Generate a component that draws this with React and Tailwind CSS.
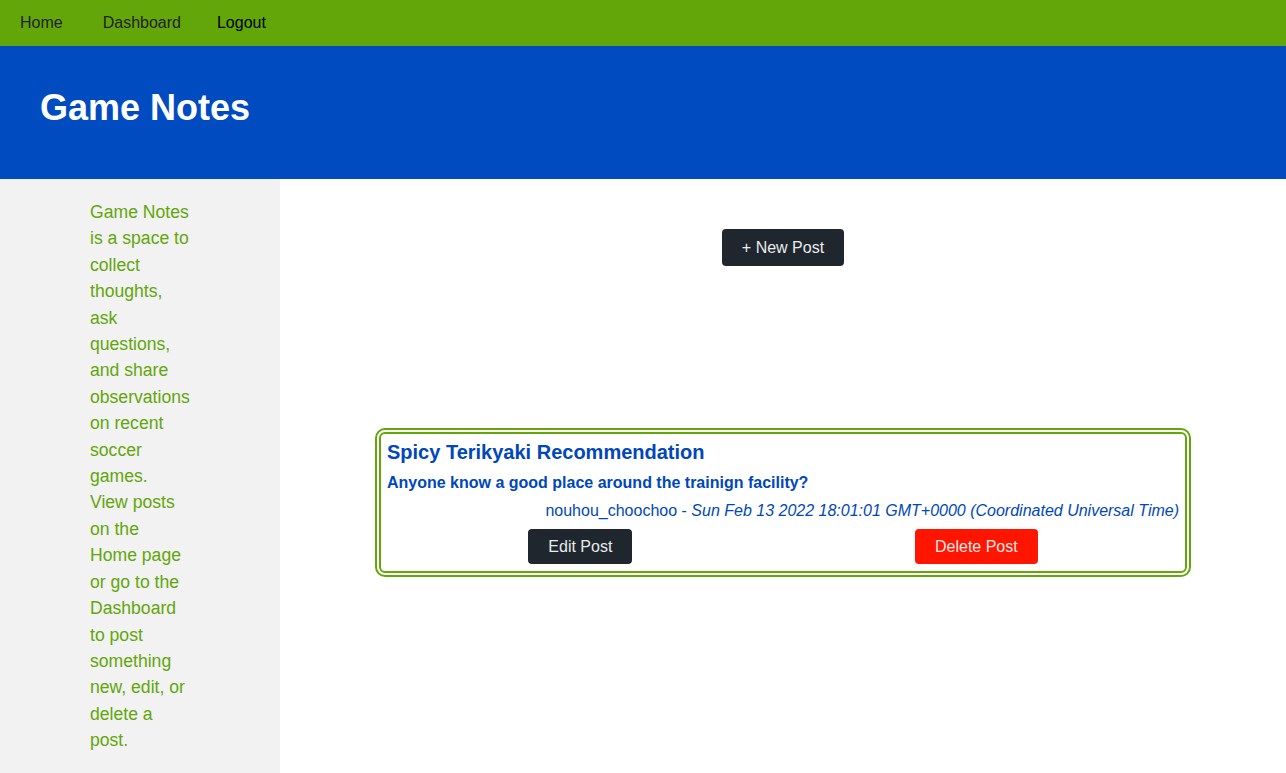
import React from "react";

export default function App() {
  const font = { fontFamily: '"Liberation Sans", Arial, sans-serif' };
  return (
    <div style={font} className="min-h-[773px] bg-white flex flex-col">
      <nav className="h-[46px] bg-[#62a60a] flex items-center text-[16px]">
        <a className="px-5 text-[#222]">Home</a>
        <a className="px-5 text-[#222]">Dashboard</a>
        <button className="pl-4 text-black">Logout</button>
      </nav>
      <header className="h-[133px] bg-[#004bbf] pl-10 pt-[42px]">
        <h1 className="text-[36px] font-bold text-white leading-[40px]">Game Notes</h1>
      </header>
      <div className="flex flex-1">
        <aside className="w-[280px] shrink-0 bg-[#f2f2f2] pl-[90px] py-5">
          <p className="w-[100px] text-[17.6px] leading-[26.4px] text-[#62a60a]">
            Game Notes is a space to collect thoughts, ask questions, and share observations on recent soccer games. View posts on the Home page or go to the Dashboard to post something new, edit, or delete a post.
          </p>
        </aside>
        <main className="flex-1 flex flex-col items-center pt-[50px]">
          <button className="h-[37px] px-5 rounded-[4px] bg-[#1f262d] text-[#e8ecef] text-[16px]">
            + New Post
          </button>
          <div className="mt-[162px] w-[816px] border-[6px] border-double border-[#62a60a] rounded-[10px] px-[6px] pt-[3px] pb-[7px] text-[#0047bb]">
            <h3 className="text-[20px] leading-[30px] font-bold">Spicy Terikyaki Recommendation</h3>
            <p className="mt-[4px] text-[16px] leading-[24px] font-bold">
              Anyone know a good place around the trainign facility?
            </p>
            <p className="mt-[4px] text-[16px] leading-[24px] text-right">
              nouhou_choochoo - <em>Sun Feb 13 2022 18:01:01 GMT+0000 (Coordinated Universal Time)</em>
            </p>
            <div className="mt-[6px] flex justify-around">
              <button className="h-[35px] px-5 rounded-[4px] bg-[#1f262d] text-[#e8ecef] text-[16px]">
                Edit Post
              </button>
              <button className="h-[35px] px-5 rounded-[4px] bg-[#ff1500] text-[#f4e8e6] text-[16px]">
                Delete Post
              </button>
            </div>
          </div>
        </main>
      </div>
    </div>
  );
}
